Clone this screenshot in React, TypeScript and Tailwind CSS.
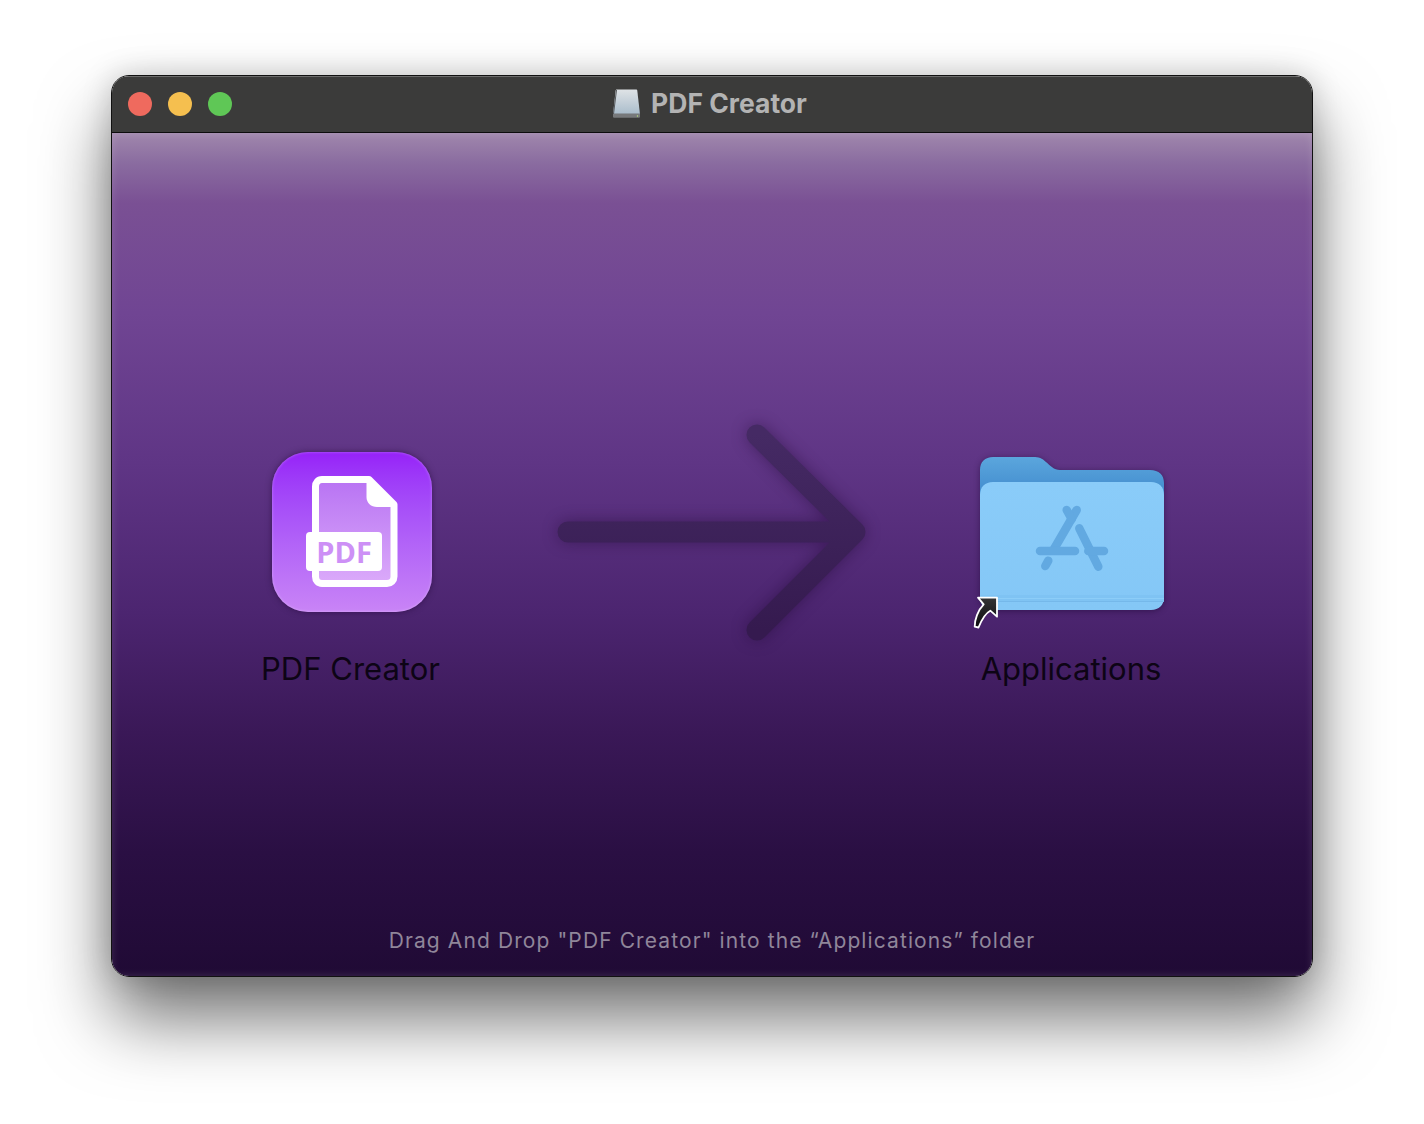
function DiskIcon() {
  return (
    <svg width="30" height="32" viewBox="0 0 30 32" className="mr-[9px] mt-[1px]">
      <defs>
        <linearGradient id="disk" x1="0" y1="0" x2="0" y2="1">
          <stop offset="0" stopColor="#dfe3e6" />
          <stop offset="1" stopColor="#a9bccb" />
        </linearGradient>
      </defs>
      <path d="M5 2.500h19c.8 0 1.200.5 1.300 1.200L28 27.500H1L3.600 3.700c.1-.7.6-1.200 1.400-1.200z" fill="url(#disk)" />
      <path d="M1 26.500h27v3c0 .8-.6 1.300-1.300 1.300H2.300c-.7 0-1.300-.5-1.300-1.300z" fill="#77797b" />
      <path d="M4.500 3 1.500 27" stroke="#55585b" strokeWidth="1" fill="none" />
      <circle cx="25.500" cy="29" r=".7" fill="#b9e27a" />
    </svg>
  )
}

function PdfAppIcon() {
  return (
    <div className="flex h-[160px] w-[160px] items-center justify-center rounded-[36px] bg-gradient-to-b from-[#9620f8] to-[#c984f6] shadow-[0_0_6px_rgba(30,0,50,0.5),inset_0_0_3px_rgba(255,255,255,0.35)]">
      <svg width="160" height="160" viewBox="0 0 160 160">
        <defs>
          <linearGradient id="page" x1="0" y1="0" x2="0" y2="1">
            <stop offset="0" stopColor="#b873f3" />
            <stop offset="1" stopColor="#dbaafa" />
          </linearGradient>
        </defs>
        <path
          d="M50 27.500h47l25 25v72c0 4-3 7-7 7H50c-4 0-6.500-3-6.500-7v-90c0-4 2.500-7 6.500-7z"
          fill="url(#page)"
          stroke="#ffffff"
          strokeWidth="7"
          strokeLinejoin="round"
        />
        <path d="M95 25l30 28v2h-20c-6 0-10.500-4-10.500-10V25z" fill="#ffffff" />
        <rect x="34" y="80" width="76" height="39" rx="4" fill="#ffffff" />
        <text
          x="72"
          y="110.500"
          textAnchor="middle"
          fontFamily="'Open Sans', sans-serif"
          fontWeight="700"
          fontSize="29"
          fill="#cd90f6"
        >
          PDF
        </text>
      </svg>
    </div>
  )
}

function FolderIcon() {
  return (
    <div className="relative h-[160px] w-[190px]">
      <svg width="190" height="162" viewBox="0 0 190 162" className="drop-shadow-[0_1px_3px_rgba(20,0,40,0.45)]">
        <defs>
          <linearGradient id="back" x1="0" y1="0" x2="0" y2="1">
            <stop offset="0" stopColor="#5ba6dd" />
            <stop offset="1" stopColor="#3c86ca" />
          </linearGradient>
          <linearGradient id="shelf" x1="0" y1="0" x2="0" y2="1">
            <stop offset="0" stopColor="#8accf9" />
            <stop offset="1" stopColor="#84c7f6" />
          </linearGradient>
        </defs>
        <path
          d="M3 20c0-8 5-13 13-13h40c6 0 9 1 13 5 4 3.500 8 8 14 8h90c9 0 14 5 14 13v20H3z"
          fill="url(#back)"
        />
        <path
          d="M3 45c0-8 5-13 13-13h158c8 0 13 5 13 13v102c0 8-5 13-13 13H16c-8 0-13-5-13-13z"
          fill="url(#shelf)"
        />
        <path d="M3 152h184v-7H3z" fill="#7fc3f3" />
        <rect x="3" y="148" width="184" height="1" fill="#8ccdf8" />
        <path d="M3 152h184v-1H3z" fill="#75b8ea" />
        <g stroke="#62a9e1" strokeWidth="8.500" strokeLinecap="round" fill="none">
          <path d="M99.700 60 77 99" />
          <path d="M89.700 60l5 9" />
          <path d="M102.300 78.300l19 38.400" />
          <path d="M63 101h35" />
          <path d="M111.300 101H127" />
          <path d="M71.300 110.700l-3 5.300" />
        </g>
      </svg>
      {/* alias badge sits over the folder corner */}
      <svg width="28" height="36" viewBox="0 0 28 36" className="absolute left-[-4px] top-[145px]">
        <defs>
          <linearGradient id="alias" x1="0" y1="0" x2="0" y2="1">
            <stop offset="0" stopColor="#333335" />
            <stop offset="1" stopColor="#0c0c0e" />
          </linearGradient>
        </defs>
        <path
          d="M5 2.700H24V21.700L17.300 15.700C12 18.500 8.500 25 5.500 32.500L1.700 31.700C1.500 25 5 15 10.700 9.300z"
          fill="url(#alias)"
          stroke="#ffffff"
          strokeWidth="1.800"
          strokeLinejoin="round"
        />
      </svg>
    </div>
  )
}

export default function App() {
  return (
    <div className="h-[1124px] w-[1424px] overflow-hidden bg-white pl-[111px] pt-[75px] font-['Inter',sans-serif]">
      <div className="flex h-[902px] w-[1202px] flex-col overflow-hidden rounded-[18px] border border-[#111111] shadow-[0_42px_70px_rgba(0,0,0,0.55),0_0_30px_rgba(0,0,0,0.18)]">
        <header className="relative flex h-[57px] shrink-0 items-center border-b border-[#0c0c0c] bg-[#3b3b3a] pl-[16px] shadow-[inset_0_1px_0_rgba(255,255,255,0.25)]">
          <div className="flex gap-[16px]">
            <span className="h-[24px] w-[24px] rounded-full bg-[#ef6a5e]" />
            <span className="h-[24px] w-[24px] rounded-full bg-[#f5bf4f]" />
            <span className="h-[24px] w-[24px] rounded-full bg-[#5fc756]" />
          </div>
          <div className="absolute inset-x-0 top-[10px] flex items-center justify-center pr-[5px] text-[26.5px] font-bold leading-[32px] text-[#b3b3b3]">
            <DiskIcon />
            PDF Creator
          </div>
        </header>

        <main className="flex flex-1 flex-col bg-[linear-gradient(to_bottom,#a087ac_0px,#8a6ca0_30px,#7a5094_70px,#704593_180px,#5f3585_330px,#4c2570_480px,#3a1857_600px,#2a0f43_720px,#200a35_840px)] shadow-[inset_0_0_8px_rgba(255,255,255,0.14)]">
          <div className="mt-[290px] flex items-start text-[31px] leading-[40px] text-[#0d0415]">
            <div className="ml-[150px] flex w-[180px] flex-col items-center">
              <div className="mt-[29px]">
                <PdfAppIcon />
              </div>
              <span className="mt-[37px] whitespace-nowrap pr-[3px]">PDF Creator</span>
            </div>

            <svg
              width="340"
              height="240"
              viewBox="0 0 340 240"
              className="ml-[97px] -mt-[13px] drop-shadow-[0_0_8px_rgba(30,5,50,0.45)]"
            >
              <defs>
                <linearGradient id="arrow" x1="0" y1="0" x2="0" y2="1">
                  <stop offset="0" stopColor="#452a64" />
                  <stop offset="1" stopColor="#351a4f" />
                </linearGradient>
              </defs>
              <path
                d="M29 122H316M218 25l98 97-98 98"
                stroke="url(#arrow)"
                strokeWidth="21"
                strokeLinecap="round"
                strokeLinejoin="round"
                fill="none"
              />
            </svg>

            <div className="ml-[98px] flex w-[190px] flex-col items-center">
              <div className="mt-[27px]">
                <FolderIcon />
              </div>
              <span className="mt-[39px] whitespace-nowrap pr-[2px]">Applications</span>
            </div>
          </div>

          <p className="mt-auto pb-[20px] text-center text-[21px] leading-[30px] tracking-[1.1px] text-[#90869a]">
            Drag And Drop "PDF Creator" into the “Applications” folder
          </p>
        </main>
      </div>
    </div>
  )
}
